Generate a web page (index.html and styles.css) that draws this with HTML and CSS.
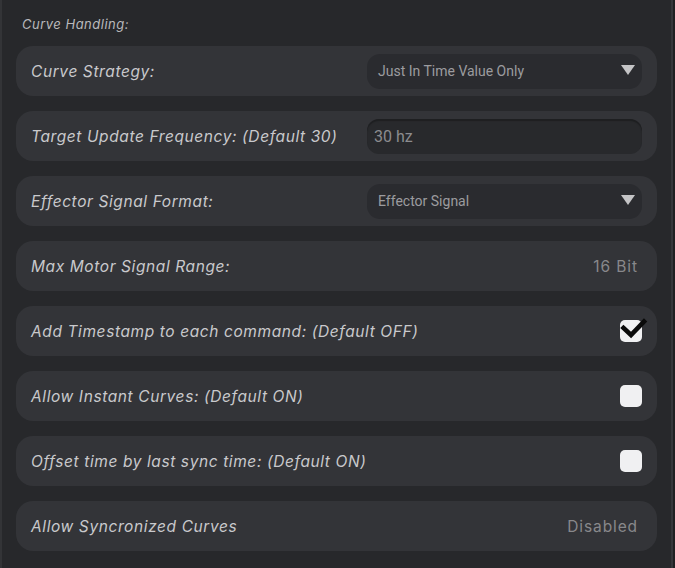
FILE: index.html
```html
<!DOCTYPE html>
<html>
<head>
<meta charset="utf-8">
<link rel="stylesheet" href="styles.css">
</head>
<body>
<div class="panel">
  <div class="section-title">Curve Handling:</div>
  <div class="rows">
    <div class="row">
      <span class="label">Curve Strategy:</span>
      <div class="select"><span>Just In Time Value Only</span><span class="caret"></span></div>
    </div>
    <div class="row">
      <span class="label">Target Update Frequency: (Default 30)</span>
      <div class="input">30 hz</div>
    </div>
    <div class="row">
      <span class="label">Effector Signal Format:</span>
      <div class="select"><span>Effector Signal</span><span class="caret"></span></div>
    </div>
    <div class="row">
      <span class="label">Max Motor Signal Range:</span>
      <span class="value">16 Bit</span>
    </div>
    <div class="row">
      <span class="label">Add Timestamp to each command: (Default OFF)</span>
      <span class="check checked">
        <svg class="tick" width="28" height="24" viewBox="0 0 28 24"><path d="M3.5 11 L11 18 L24 4.5" fill="none" stroke="#0a0a0a" stroke-width="4.6" stroke-linecap="square" stroke-linejoin="miter"/></svg>
      </span>
    </div>
    <div class="row">
      <span class="label">Allow Instant Curves: (Default ON)</span>
      <span class="check"></span>
    </div>
    <div class="row">
      <span class="label">Offset time by last sync time: (Default ON)</span>
      <span class="check"></span>
    </div>
    <div class="row">
      <span class="label">Allow Syncronized Curves</span>
      <span class="value">Disabled</span>
    </div>
  </div>
</div>
</body>
</html>
```
FILE: styles.css
```css
html, body {
  margin: 0;
  padding: 0;
  background: #1f2022;
}
body {
  width: 675px;
  height: 568px;
  overflow: hidden;
}
.panel {
  width: 669px;
  height: 568px;
  background: #27282b;
  border-left: 2px solid #333437;
  border-right: 2px solid #35363a;
}
.section-title {
  font-family: Inter, "Liberation Sans", sans-serif;
  font-style: italic;
  font-size: 13px;
  letter-spacing: 0.5px;
  color: #b9b9bc;
  padding: 15px 0 0 20px;
  height: 18px;
  line-height: 18px;
}
.rows {
  display: flex;
  flex-direction: column;
  gap: 15px;
  margin: 13px 0 0 14px;
  width: 641px;
}
.row {
  height: 50px;
  box-sizing: border-box;
  background: #333438;
  border-radius: 17px;
  display: flex;
  align-items: center;
  justify-content: space-between;
  padding: 0 15px;
}
.label {
  font-family: Inter, "Liberation Sans", sans-serif;
  font-style: italic;
  font-size: 15.5px;
  letter-spacing: 0.6px;
  color: #c9c9cc;
}
.select {
  width: 275px;
  height: 35px;
  box-sizing: border-box;
  background: #2a2b2f;
  border-radius: 13px;
  display: flex;
  align-items: center;
  justify-content: space-between;
  padding: 0 7px 0 11px;
  font-family: Roboto, "Liberation Sans", sans-serif;
  font-size: 14px;
  color: #9c9c9f;
}
.caret {
  width: 0;
  height: 0;
  border-left: 7.5px solid transparent;
  border-right: 7.5px solid transparent;
  border-top: 10px solid #c4c4c6;
  margin-top: -2px;
}
.input {
  width: 275px;
  height: 35px;
  box-sizing: border-box;
  background: #28292c;
  border-radius: 12px;
  box-shadow: inset 0 2px 1px #1e1f21;
  display: flex;
  align-items: center;
  padding: 0 7px;
  font-family: Roboto, "Liberation Sans", sans-serif;
  font-size: 16px;
  color: #8c8c8f;
}
.value {
  font-family: Inter, "Liberation Sans", sans-serif;
  font-size: 15.5px;
  letter-spacing: 0.9px;
  color: #88888b;
  margin-right: 4px;
}
.check {
  position: relative;
  width: 22px;
  height: 22px;
  background: #f0f0f2;
  border-radius: 5px;
}
.tick {
  position: absolute;
  left: 0px;
  top: -3px;
}
```
